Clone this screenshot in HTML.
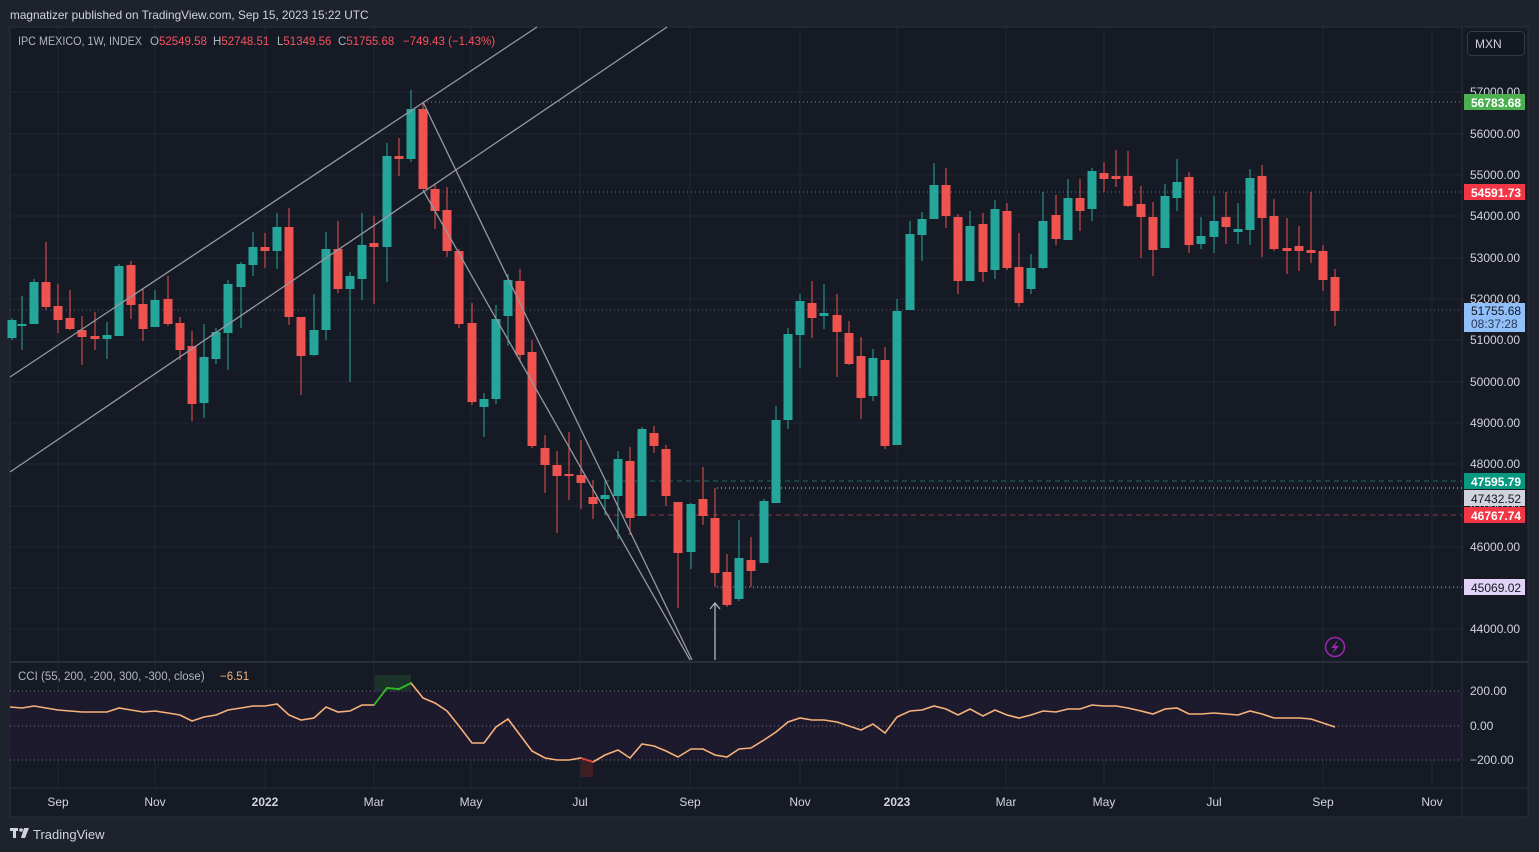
<!DOCTYPE html>
<html><head><meta charset="utf-8"><style>
html,body{margin:0;padding:0;background:#1e222d;width:1539px;height:852px;overflow:hidden;font-family:"Liberation Sans",sans-serif;}
#hdr{position:absolute;left:10px;top:8px;color:#d1d4dc;font-size:11.8px;}
svg{position:absolute;left:0;top:0}
</style></head><body>
<div id="hdr">magnatizer published on TradingView.com, Sep 15, 2023 15:22 UTC</div>
<svg id="s" width="1539" height="852" xmlns="http://www.w3.org/2000/svg" font-family="Liberation Sans, sans-serif">
<rect x="10" y="27" width="1518" height="790" fill="#161a25" stroke="#2a2e39"/>
<g id="grid" stroke="#232734" stroke-width="1"></g>
<rect x="10" y="691" width="1452" height="69" fill="#1e1a2d"/>
<g stroke="#787b86" stroke-width="1" stroke-dasharray="1,3">
<line x1="10" y1="691" x2="1462" y2="691"/><line x1="10" y1="726" x2="1462" y2="726"/><line x1="10" y1="760" x2="1462" y2="760"/></g>
<line x1="1462" y1="27" x2="1462" y2="817" stroke="#2a2e39"/>
<line x1="10" y1="662" x2="1528" y2="662" stroke="#2a2e39" stroke-width="2"/>
<line x1="10" y1="788" x2="1528" y2="788" stroke="#2a2e39"/>
<g stroke-width="1">
<line x1="423" y1="102" x2="1462" y2="102" stroke="#4caf50" stroke-dasharray="1,3"/>
<line x1="423" y1="192" x2="1462" y2="192" stroke="#f23645" stroke-dasharray="1,3"/>
<line x1="10" y1="310" x2="1462" y2="310" stroke="#5d6273" stroke-dasharray="1,3"/>
<line x1="605" y1="481" x2="1462" y2="481" stroke="#1f6b63" stroke-dasharray="5,4"/>
<line x1="717" y1="488" x2="1462" y2="488" stroke="#d1d4dc" stroke-dasharray="1,3"/>
<line x1="605" y1="515" x2="1462" y2="515" stroke="#8a3a3d" stroke-dasharray="5,4"/>
<line x1="717" y1="587" x2="1462" y2="587" stroke="#9598a1" stroke-dasharray="1,3"/>
</g>
<g id="c"></g>
<g stroke="#9598a1" stroke-width="1.3" fill="none">
<line x1="10" y1="377" x2="537" y2="27"/>
<line x1="10" y1="472" x2="667" y2="27"/>
<line x1="423" y1="190" x2="690" y2="660"/>
<line x1="423" y1="102" x2="692" y2="660"/>
<line x1="715" y1="604" x2="715" y2="660" stroke="#b2b5be"/>
<polyline points="710,609 715,603 720,609" stroke="#b2b5be"/>
</g>
<rect x="375" y="675" width="36" height="16" fill="#1d3a2a" opacity="0.8"/>
<rect x="581" y="760" width="12" height="17" fill="#4a1f24" opacity="0.8"/>
<polyline id="cci" fill="none" stroke="#f7b27a" stroke-width="1.6"/>
<polyline points="374,705 387,688 399,689 411,683" fill="none" stroke="#1ec21e" stroke-width="1.6"/>
<polyline points="581,758 593,762" fill="none" stroke="#e53935" stroke-width="1.6"/>
<g font-size="12" fill="#d1d4dc" id="axis"></g>
<g font-size="11.5" fill="#b2b5be">
<text x="18" y="45" textLength="124" lengthAdjust="spacingAndGlyphs">IPC MEXICO, 1W, INDEX</text>
<text x="150" y="45">O<tspan fill="#f7525f">52549.58</tspan></text>
<text x="213" y="45">H<tspan fill="#f7525f">52748.51</tspan></text>
<text x="277" y="45">L<tspan fill="#f7525f">51349.56</tspan></text>
<text x="338" y="45">C<tspan fill="#f7525f">51755.68</tspan></text>
<text x="403" y="45" fill="#f7525f">−749.43 (−1.43%)</text>
<text x="18" y="680">CCI (55, 200, -200, 300, -300, close)</text>
<text x="220" y="680" fill="#f7b27a">−6.51</text>
</g>
<rect x="1467.5" y="31.5" width="57" height="24" rx="4" fill="#131722" stroke="#363a45"/>
<text x="1475" y="48" font-size="12" fill="#d1d4dc">MXN</text>
<g font-size="12" font-weight="bold">
<rect x="1464" y="94" width="61" height="16" fill="#4caf50"/><text x="1471" y="107" fill="#fff">56783.68</text>
<rect x="1464" y="184" width="61" height="16" fill="#f23645"/><text x="1471" y="197" fill="#fff">54591.73</text>
<rect x="1464" y="473" width="61" height="16" fill="#089981"/><text x="1471" y="486" fill="#fff">47595.79</text>
<rect x="1464" y="507" width="61" height="16" fill="#f23645"/><text x="1471" y="520" fill="#fff">46767.74</text>
</g>
<g font-size="12">
<rect x="1464" y="303" width="61" height="29" fill="#90bff9"/><text x="1471" y="315" fill="#131722">51755.68</text><text x="1471" y="328" fill="#2a3a55">08:37:28</text>
<rect x="1464" y="490" width="61" height="16" fill="#d1d4dc"/><text x="1471" y="503" fill="#131722">47432.52</text>
<rect x="1464" y="579" width="61" height="16" fill="#e1d3f5"/><text x="1471" y="592" fill="#131722">45069.02</text>
</g>
<circle cx="1335" cy="647" r="9.5" fill="none" stroke="#9c27b0" stroke-width="1.5"/>
<path d="M1338 640 L1331 648 L1335 648 L1332 654 L1339 646 L1335 646 Z" fill="#9c27b0"/>
<g fill="#d1d4dc"><rect x="10" y="828" width="8" height="3"/><rect x="13" y="828" width="3" height="10"/><circle cx="21" cy="830" r="1.8"/><path d="M24 828 L29 828 L25 838 L21 838 Z"/></g>
<text x="33" y="839" font-size="13" fill="#d1d4dc">TradingView</text>
</svg>
<script>
var NS="http://www.w3.org/2000/svg",s=document.getElementById('s');
function el(p,t,a,txt){var e=document.createElementNS(NS,t);for(var k in a)e.setAttribute(k,a[k]);if(txt)e.textContent=txt;p.appendChild(e);return e;}
var g=document.getElementById('grid');
var hy=[92,134,175,216,258,299,340,382,423,464,506,547,588,629];
hy.forEach(function(y){el(g,'line',{x1:10,y1:y,x2:1462,y2:y});});
var vx=[58,155,265,374,471,580,690,800,897,1006,1104,1214,1323,1432];
vx.forEach(function(x){el(g,'line',{x1:x,y1:27,x2:x,y2:788});});
var ax=document.getElementById('axis');
var pl=['57000.00','56000.00','55000.00','54000.00','53000.00','52000.00','51000.00','50000.00','49000.00','48000.00','47000.00','46000.00','45000.00','44000.00'];
hy.forEach(function(y,i){el(ax,'text',{x:1470,y:y+4},pl[i]);});
el(ax,'text',{x:1470,y:695},'200.00');el(ax,'text',{x:1470,y:730},'0.00');el(ax,'text',{x:1470,y:764},'−200.00');
var ml=['Sep','Nov','2022','Mar','May','Jul','Sep','Nov','2023','Mar','May','Jul','Sep','Nov'];
vx.forEach(function(x,i){var t=el(ax,'text',{x:x,y:806,'text-anchor':'middle'},ml[i]);if(ml[i].length==4)t.setAttribute('font-weight','bold');});
var D=[[12,318,320,338,340,1],[22,296,324,326,350,1],[34,279,282,324,324,1],[46,242,282,307,310,0],[58,284,306,320,333,0],[70,290,318,329,330,0],[82,316,330,337,365,0],[95,312,336,339,350,0],[107,322,335,339,359,1],[119,264,266,336,336,1],[131,261,265,305,319,0],[143,288,304,329,341,0],[155,290,300,327,327,1],[168,276,299,324,326,0],[180,317,323,350,360,0],[192,331,346,404,421,0],[204,324,357,403,418,1],[216,328,332,359,364,1],[228,280,284,333,370,1],[241,262,264,287,328,1],[253,232,247,265,276,1],[265,233,247,251,268,0],[277,213,227,251,269,1],[289,208,227,317,325,0],[301,317,317,356,395,0],[314,294,330,355,356,1],[326,232,249,330,340,1],[338,221,249,289,293,0],[350,272,276,289,382,1],[362,213,245,279,300,1],[374,216,243,247,304,0],[387,143,156,247,282,1],[399,138,156,159,176,0],[411,90,109,159,162,1],[423,102,109,189,189,0],[435,184,189,211,229,0],[447,187,210,251,257,0],[459,249,251,324,328,0],[472,303,323,402,405,0],[484,393,399,407,437,1],[496,305,319,399,404,1],[508,274,280,316,346,1],[520,269,281,355,362,0],[532,340,352,446,448,0],[545,435,448,465,493,0],[557,451,465,476,533,0],[569,432,474,476,500,0],[581,440,475,483,509,0],[593,480,497,504,519,0],[605,481,495,499,515,1],[618,451,459,496,539,1],[630,447,461,518,535,0],[642,427,429,516,516,1],[654,426,433,446,453,0],[666,445,449,496,506,0],[678,502,502,553,608,0],[691,503,504,552,569,1],[703,467,499,516,525,0],[715,488,518,573,587,0],[727,554,572,605,607,0],[739,520,558,599,601,1],[751,537,560,571,587,0],[764,499,501,563,563,1],[776,406,420,503,503,1],[788,328,334,420,429,1],[800,294,301,335,368,1],[812,281,303,318,338,0],[824,284,313,316,329,1],[837,294,315,332,377,0],[849,321,333,364,365,0],[861,337,356,398,419,0],[873,349,358,396,401,1],[885,347,360,446,449,0],[897,299,311,445,445,1],[910,221,234,310,310,1],[922,212,219,235,261,1],[934,163,185,219,219,1],[946,168,185,216,228,0],[958,214,217,281,294,0],[970,211,226,281,281,1],[983,213,224,272,282,0],[995,200,209,270,279,1],[1007,203,211,268,270,0],[1019,233,267,303,307,0],[1031,254,268,289,294,1],[1043,192,221,268,269,1],[1056,195,215,239,245,0],[1068,179,198,240,240,1],[1080,179,198,211,231,0],[1092,168,171,209,221,1],[1104,162,173,179,192,0],[1116,150,176,179,187,0],[1128,151,176,206,207,0],[1141,186,204,217,258,0],[1153,202,217,250,276,0],[1165,184,196,248,248,1],[1177,159,182,198,211,1],[1189,172,177,245,253,0],[1201,217,236,244,249,1],[1214,196,221,237,253,1],[1226,192,217,227,244,0],[1238,203,229,232,244,1],[1250,169,178,230,245,1],[1262,165,176,218,257,0],[1274,199,216,249,251,0],[1287,218,248,251,274,0],[1299,226,246,251,271,0],[1311,192,250,253,263,0],[1323,245,251,280,291,0],[1335,269,277,311,326,0]];
var c=document.getElementById('c');
D.forEach(function(d){var col=d[5]?'#26a69a':'#ef5350';
el(c,'line',{x1:d[0],y1:d[1],x2:d[0],y2:d[4],stroke:col,'stroke-width':1});
el(c,'rect',{x:d[0]-4.5,y:d[2],width:9,height:Math.max(2,d[3]-d[2]),fill:col});});
var P="10,707 22,708 34,706 46,708 58,710 70,711 82,712 95,712 107,712 119,708 131,710 143,712 155,711 168,713 180,715 192,721 204,717 216,715 228,710 241,708 253,706 265,706 277,704 289,715 301,720 314,718 326,707 338,712 350,711 362,705 374,705 387,688 399,689 411,683 423,698 435,703 447,711 459,726 472,743 484,743 496,727 508,719 520,735 532,751 545,758 557,760 569,760 581,758 593,762 605,755 618,750 630,758 642,744 654,746 666,751 678,757 691,749 703,749 715,755 727,757 739,749 751,748 764,740 776,732 788,722 800,718 812,720 824,720 837,722 849,726 861,730 873,724 885,733 897,717 910,711 922,710 934,706 946,709 958,715 970,709 983,716 995,710 1007,715 1019,718 1031,715 1043,711 1056,712 1068,709 1080,709 1092,705 1104,706 1116,706 1128,708 1141,711 1153,714 1165,709 1177,708 1189,714 1201,714 1214,713 1226,714 1238,715 1250,711 1262,714 1274,718 1287,718 1299,718 1311,719 1323,723 1335,727";
document.getElementById('cci').setAttribute('points',P);
</script>
</body></html>
